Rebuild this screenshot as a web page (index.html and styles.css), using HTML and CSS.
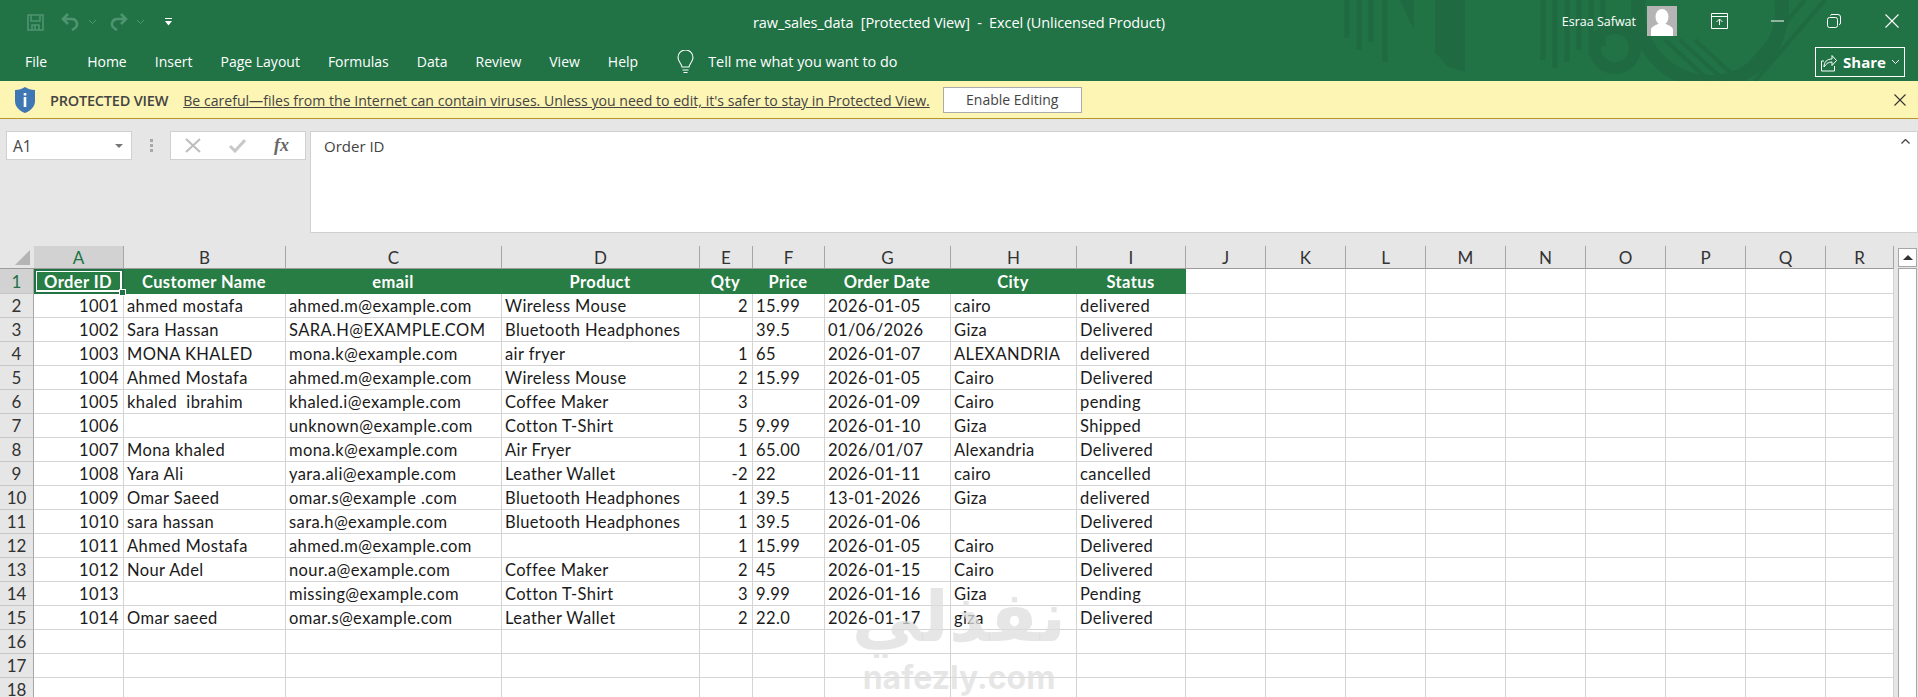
FILE: index.html
```html
<!DOCTYPE html>
<html lang="en">
<head>
    <meta charset="UTF-8">
    <meta name="viewport" content="width=device-width, initial-scale=1.0">
    <title>raw_sales_data - Excel</title>
    <link rel="stylesheet" href="styles.css">
</head>
<body>
    <!-- Title bar and ribbon tabs -->
    <header class="app-header">
        <svg class="header-pattern" width="600" height="81" viewBox="0 0 600 81" fill="none">
            <g stroke="#1f6a41" stroke-width="5">
                <path d="M12 0V38M24 0V50M36 0V42M50 0V62"/>
                <path d="M208 0V60M220 0V68M232 0V62M244 0V50M256 0V56M268 0V46"/>
            </g>
            <path d="M65 0l14 30V0zM100 0h30v72l-18-6-12-14z" fill="#1f6a41"/>
            <circle cx="280" cy="48" r="20" stroke="#1f6a41" stroke-width="12"/>
            <circle cx="375" cy="10" r="72" stroke="#1f6a41" stroke-width="14"/>
            <path d="M330 40l50 46M345 40l50 46M360 40l50 46M470 0l-70 81M490 0l-70 81" stroke="#1f6a41" stroke-width="4"/>
        </svg>
        <div class="title-row">
            <div class="qat">
                <svg width="17" height="17" viewBox="0 0 17 17" fill="none" stroke="#4f9470" stroke-width="1.6"><path d="M1 1h15v15H1zM4 1v6h9V1M5 16v-5h7v5M8 11v5"/></svg>
                <svg class="qat-undo" width="19" height="18" viewBox="0 0 19 18" fill="none" stroke="#4f9470" stroke-width="2.6"><path d="M7 1L2 6l5 5M2 6h9a5 5 0 0 1 3 9l-3 2"/></svg>
                <svg class="qat-chev" width="7" height="4" viewBox="0 0 7 4" fill="none" stroke="#4f9470"><path d="M0 0l3.5 3.5L7 0"/></svg>
                <svg class="qat-redo" width="19" height="18" viewBox="0 0 19 18" fill="none" stroke="#4f9470" stroke-width="2.6"><path d="M12 1l5 5-5 5M17 6H8a5 5 0 0 0-3 9l3 2"/></svg>
                <svg class="qat-chev" width="7" height="4" viewBox="0 0 7 4" fill="none" stroke="#4f9470"><path d="M0 0l3.5 3.5L7 0"/></svg>
                <svg class="qat-more" width="7" height="8" viewBox="0 0 7 8" fill="#fff"><path d="M0 0h7v1H0zM0 3h7L3.500 7.500z"/></svg>
            </div>
            <div class="doc-title">raw_sales_data&nbsp; [Protected View]&nbsp; -&nbsp; Excel (Unlicensed Product)</div>
            <div class="window-controls">
                <span class="user-name">Esraa Safwat</span>
                <svg class="avatar" width="30" height="30" viewBox="0 0 30 30"><rect width="30" height="30" fill="#b4b4b4"/><ellipse cx="15" cy="11" rx="6.500" ry="8" fill="#fff"/><path d="M4 30v-6c0-3 3-4 7-6h8c4 2 7 3 7 6v6z" fill="#fff"/></svg>
                <svg class="ctl-ribbon" width="17" height="16" viewBox="0 0 17 16" fill="none" stroke="#fff"><path d="M.5.500h16v15H.5zM.5 3.500h16M8.500 12V6M5.500 9l3-3 3 3"/></svg>
                <svg class="ctl-min" width="13" height="2" viewBox="0 0 13 2" stroke="#fff"><path d="M0 1h13"/></svg>
                <svg class="ctl-restore" width="14" height="14" viewBox="0 0 14 14" fill="none" stroke="#fff"><rect x=".5" y="3.500" width="10" height="10" rx="2"/><path d="M3.500 1.500q0-1 1.500-1h6q2.500 0 2.500 2.500v6q0 1.500-1.500 1.500"/></svg>
                <svg class="ctl-close" width="14" height="14" viewBox="0 0 14 14" stroke="#fff" stroke-width="1.100"><path d="M.5.500l13 13M13.500.500l-13 13"/></svg>
            </div>
        </div>
        <nav class="ribbon-tabs">
            <a class="tab tab-file">File</a>
            <a class="tab">Home</a>
            <a class="tab">Insert</a>
            <a class="tab">Page Layout</a>
            <a class="tab">Formulas</a>
            <a class="tab">Data</a>
            <a class="tab">Review</a>
            <a class="tab">View</a>
            <a class="tab">Help</a>
            <div class="tell-me">
                <svg width="17" height="24" viewBox="0 0 17 24" fill="none" stroke="#fff" stroke-width="1.100"><path d="M5 17c0-3-4-5-4-9.500a7.500 7.500 0 0 1 15 0C16 12 12 14 12 17zM5.500 20h6M6.500 22.500h4"/></svg>
                <span>Tell me what you want to do</span>
            </div>
            <button class="share-btn" type="button">
                <svg width="16" height="19" viewBox="0 0 16 19" fill="none" stroke="#fff"><path d="M3 8H.5v10h13v-5M3 14c0-5 3-8 8-8V2.500l4.500 5-4.500 5V9c-4 0-6 2-8 5z"/></svg>
                <span>Share</span>
                <svg width="7" height="4" viewBox="0 0 7 4" fill="none" stroke="#fff"><path d="M0 0l3.500 3.500L7 0"/></svg>
            </button>
        </nav>
    </header>

    <!-- Protected view message bar -->
    <div class="message-bar">
        <svg class="shield" width="20" height="26" viewBox="0 0 20 26"><path d="M10 0c3 2 6 3 10 3v11c0 6-5 10-10 12C5 24 0 20 0 14V3c4 0 7-1 10-3z" fill="#3f77b5"/><path d="M8.700 10h2.600v10H8.700zM8.700 6h2.600v2.500H8.700z" fill="#fff"/></svg>
        <strong class="message-label">PROTECTED VIEW</strong>
        <a class="message-text">Be careful—files from the Internet can contain viruses. Unless you need to edit, it's safer to stay in Protected View.</a>
        <button class="enable-btn" type="button">Enable Editing</button>
        <svg class="message-close" width="12" height="12" viewBox="0 0 12 12" stroke="#333" stroke-width="1.100"><path d="M.5.500l11 11M11.500.500l-11 11"/></svg>
    </div>

    <!-- Formula bar -->
    <div class="formula-bar">
        <div class="name-box">
            <span>A1</span>
            <svg width="8" height="4" viewBox="0 0 8 4" fill="#777"><path d="M0 0h8L4 4z"/></svg>
        </div>
        <div class="grip"><i></i><i></i><i></i></div>
        <div class="formula-buttons">
            <svg width="16" height="15" viewBox="0 0 16 15" stroke="#bdbdbd" stroke-width="2"><path d="M1 1l14 13M15 1L1 14"/></svg>
            <svg width="17" height="15" viewBox="0 0 17 15" fill="none" stroke="#c8c8c8" stroke-width="3"><path d="M1 8l5 5L16 2"/></svg>
            <span class="fx">fx</span>
        </div>
        <div class="formula-input">Order ID</div>
        <svg class="formula-collapse" width="9" height="5" viewBox="0 0 9 5" fill="none" stroke="#444" stroke-width="1.300"><path d="M.5 4.500l4-4 4 4"/></svg>
    </div>

    <!-- Worksheet -->
    <main class="sheet">
        <table class="grid">
            <colgroup>
                <col class="c-row"><col class="c-a"><col class="c-b"><col class="c-c"><col class="c-d"><col class="c-e"><col class="c-f"><col class="c-g"><col class="c-h"><col class="c-i">
                <col class="c-std"><col class="c-std"><col class="c-std"><col class="c-std"><col class="c-std"><col class="c-std"><col class="c-std"><col class="c-std"><col class="c-r">
            </colgroup>
            <thead>
                <tr class="col-heads">
                    <th class="corner"><span class="corner-mark"></span></th>
                    <th class="col-active">A</th><th>B</th><th>C</th><th>D</th><th>E</th><th>F</th><th>G</th><th>H</th><th>I</th><th>J</th><th>K</th><th>L</th><th>M</th><th>N</th><th>O</th><th>P</th><th>Q</th><th>R</th>
                </tr>
            </thead>
            <tbody>
                <tr class="head-row"><th class="row-active">1</th><td class="hc selected">Order ID<span class="fill-handle"></span></td><td class="hc">Customer Name</td><td class="hc">email</td><td class="hc">Product</td><td class="hc">Qty</td><td class="hc">Price</td><td class="hc">Order Date</td><td class="hc">City</td><td class="hc">Status</td><td></td><td></td><td></td><td></td><td></td><td></td><td></td><td></td><td></td></tr>
                <tr><th>2</th><td class="num">1001</td><td>ahmed mostafa</td><td>ahmed.m@example.com</td><td>Wireless Mouse</td><td class="num">2</td><td>15.99</td><td>2026-01-05</td><td>cairo</td><td>delivered</td><td></td><td></td><td></td><td></td><td></td><td></td><td></td><td></td><td></td></tr>
                <tr><th>3</th><td class="num">1002</td><td>Sara Hassan</td><td>SARA.H@EXAMPLE.COM</td><td>Bluetooth Headphones</td><td class="num"></td><td>39.5</td><td>01/06/2026</td><td>Giza</td><td>Delivered</td><td></td><td></td><td></td><td></td><td></td><td></td><td></td><td></td><td></td></tr>
                <tr><th>4</th><td class="num">1003</td><td>MONA KHALED</td><td>mona.k@example.com</td><td>air fryer</td><td class="num">1</td><td>65</td><td>2026-01-07</td><td>ALEXANDRIA</td><td>delivered</td><td></td><td></td><td></td><td></td><td></td><td></td><td></td><td></td><td></td></tr>
                <tr><th>5</th><td class="num">1004</td><td>Ahmed Mostafa</td><td>ahmed.m@example.com</td><td>Wireless Mouse</td><td class="num">2</td><td>15.99</td><td>2026-01-05</td><td>Cairo</td><td>Delivered</td><td></td><td></td><td></td><td></td><td></td><td></td><td></td><td></td><td></td></tr>
                <tr><th>6</th><td class="num">1005</td><td>khaled&nbsp; ibrahim</td><td>khaled.i@example.com</td><td>Coffee Maker</td><td class="num">3</td><td></td><td>2026-01-09</td><td>Cairo</td><td>pending</td><td></td><td></td><td></td><td></td><td></td><td></td><td></td><td></td><td></td></tr>
                <tr><th>7</th><td class="num">1006</td><td></td><td>unknown@example.com</td><td>Cotton T-Shirt</td><td class="num">5</td><td>9.99</td><td>2026-01-10</td><td>Giza</td><td>Shipped</td><td></td><td></td><td></td><td></td><td></td><td></td><td></td><td></td><td></td></tr>
                <tr><th>8</th><td class="num">1007</td><td>Mona khaled</td><td>mona.k@example.com</td><td>Air Fryer</td><td class="num">1</td><td>65.00</td><td>2026/01/07</td><td>Alexandria</td><td>Delivered</td><td></td><td></td><td></td><td></td><td></td><td></td><td></td><td></td><td></td></tr>
                <tr><th>9</th><td class="num">1008</td><td>Yara Ali</td><td>yara.ali@example.com</td><td>Leather Wallet</td><td class="num">-2</td><td>22</td><td>2026-01-11</td><td>cairo</td><td>cancelled</td><td></td><td></td><td></td><td></td><td></td><td></td><td></td><td></td><td></td></tr>
                <tr><th>10</th><td class="num">1009</td><td>Omar Saeed</td><td>omar.s@example .com</td><td>Bluetooth Headphones</td><td class="num">1</td><td>39.5</td><td>13-01-2026</td><td>Giza</td><td>delivered</td><td></td><td></td><td></td><td></td><td></td><td></td><td></td><td></td><td></td></tr>
                <tr><th>11</th><td class="num">1010</td><td>sara hassan</td><td>sara.h@example.com</td><td>Bluetooth Headphones</td><td class="num">1</td><td>39.5</td><td>2026-01-06</td><td></td><td>Delivered</td><td></td><td></td><td></td><td></td><td></td><td></td><td></td><td></td><td></td></tr>
                <tr><th>12</th><td class="num">1011</td><td>Ahmed Mostafa</td><td>ahmed.m@example.com</td><td></td><td class="num">1</td><td>15.99</td><td>2026-01-05</td><td>Cairo</td><td>Delivered</td><td></td><td></td><td></td><td></td><td></td><td></td><td></td><td></td><td></td></tr>
                <tr><th>13</th><td class="num">1012</td><td>Nour Adel</td><td>nour.a@example.com</td><td>Coffee Maker</td><td class="num">2</td><td>45</td><td>2026-01-15</td><td>Cairo</td><td>Delivered</td><td></td><td></td><td></td><td></td><td></td><td></td><td></td><td></td><td></td></tr>
                <tr><th>14</th><td class="num">1013</td><td></td><td>missing@example.com</td><td>Cotton T-Shirt</td><td class="num">3</td><td>9.99</td><td>2026-01-16</td><td>Giza</td><td>Pending</td><td></td><td></td><td></td><td></td><td></td><td></td><td></td><td></td><td></td></tr>
                <tr><th>15</th><td class="num">1014</td><td>Omar saeed</td><td>omar.s@example.com</td><td>Leather Wallet</td><td class="num">2</td><td>22.0</td><td>2026-01-17</td><td>giza</td><td>Delivered</td><td></td><td></td><td></td><td></td><td></td><td></td><td></td><td></td><td></td></tr>
                <tr><th>16</th><td></td><td></td><td></td><td></td><td></td><td></td><td></td><td></td><td></td><td></td><td></td><td></td><td></td><td></td><td></td><td></td><td></td><td></td></tr>
                <tr><th>17</th><td></td><td></td><td></td><td></td><td></td><td></td><td></td><td></td><td></td><td></td><td></td><td></td><td></td><td></td><td></td><td></td><td></td><td></td></tr>
                <tr><th>18</th><td></td><td></td><td></td><td></td><td></td><td></td><td></td><td></td><td></td><td></td><td></td><td></td><td></td><td></td><td></td><td></td><td></td><td></td></tr>
            </tbody>
        </table>
        <div class="scrollbar">
            <div class="scroll-up"><svg width="10" height="5" viewBox="0 0 10 5" fill="#333"><path d="M0 5l5-5 5 5z"/></svg></div>
            <div class="scroll-track"></div>
        </div>
        <!-- Site watermark lying over the sheet -->
        <div class="watermark">
            <div class="wm-arabic" lang="ar" dir="rtl">نفذلي</div>
            <div class="wm-latin">nafezly.com</div>
        </div>
    </main>
</body>
</html>
```

FILE: styles.css
```css
* {
    margin: 0;
    padding: 0;
    box-sizing: border-box;
}

html, body {
    height: 100%;
    overflow: hidden;
}

body {
    background-color: #e6e6e6;
    font-family: "Open Sans", "Noto Sans", sans-serif;
    color: #333;
    display: flex;
    flex-direction: column;
}

/* header */
.app-header {
    position: relative;
    height: 81px;
    background-color: #217346;
    color: #fff;
    flex: none;
    overflow: hidden;
}

.header-pattern {
    position: absolute;
    top: 0;
    left: 1335px;
}

.title-row {
    position: relative;
    height: 44px;
    display: grid;
    grid-template-columns: 1fr auto 1fr;
    align-items: center;
}

.qat {
    display: flex;
    align-items: center;
    padding-left: 27px;
}

.qat-undo { margin-left: 17px; }
.qat-redo { margin-left: 13px; }
.qat-chev { margin-left: 9px; }
.qat-more { margin-left: 21px; }

.doc-title {
    font-size: 14.5px;
    letter-spacing: -0.1px;
    white-space: pre;
}

.window-controls {
    display: flex;
    align-items: center;
    justify-content: flex-end;
    height: 100%;
    padding-bottom: 2px;
}

.user-name {
    font-size: 12.500px;
    margin-right: 11px;
}

.avatar { margin-right: 34px; }
.ctl-ribbon { margin-right: 43px; }
.ctl-min { margin-right: 43px; }
.ctl-restore { margin-right: 44px; }
.ctl-close { margin-right: 19px; }

.ribbon-tabs {
    position: relative;
    height: 37px;
    display: flex;
    align-items: center;
    padding-left: 25px;
    padding-bottom: 2px;
    gap: 28px;
    font-size: 14px;
}

.tab-file { margin-right: 12px; }

.tell-me {
    display: flex;
    align-items: center;
    gap: 14px;
    margin-left: 11px;
    font-size: 14.4px;
}

.share-btn {
    position: absolute;
    right: 13px;
    top: 3px;
    width: 90px;
    height: 30px;
    background: transparent;
    border: 1px solid #fff;
    color: #fff;
    font-family: inherit;
    font-size: 15px;
    font-weight: 700;
    display: flex;
    align-items: center;
    justify-content: center;
    gap: 6px;
}

/* message bar */
.message-bar {
    height: 38px;
    flex: none;
    background-color: #fdf5b4;
    border-bottom: 1px solid #b5982c;
    display: flex;
    align-items: center;
    padding-left: 15px;
    font-size: 14.1px;
    color: #444;
}

.message-label {
    font-weight: 600;
    font-size: 14.5px;
    margin-left: 15px;
    padding-top: 2px;
    letter-spacing: -0.2px;
}

.message-text {
    margin-left: 15px;
    padding-top: 2px;
    text-decoration: underline;
    white-space: nowrap;
}

.enable-btn {
    width: 139px;
    height: 26px;
    margin-left: 13px;
    background: #fff;
    border: 1px solid #ababab;
    font-family: inherit;
    font-size: 14px;
    color: #444;
}

.message-close { margin-left: auto; margin-right: 12px; }

/* formula bar */
.formula-bar {
    position: relative;
    height: 127px;
    flex: none;
    display: flex;
    align-items: flex-start;
    padding: 12px 0 0 6px;
}

.name-box {
    width: 126px;
    height: 29px;
    background: #fff;
    border: 1px solid #d0d0d0;
    display: flex;
    align-items: center;
    justify-content: space-between;
    padding: 0 8px 0 6px;
    font-size: 15.5px;
    color: #444;
}

.grip {
    width: 38px;
    height: 29px;
    display: flex;
    flex-direction: column;
    align-items: center;
    justify-content: center;
    gap: 2px;
}

.grip i {
    width: 3px;
    height: 3px;
    background: #a8a8a8;
}

.formula-buttons {
    width: 136px;
    height: 29px;
    background: #fff;
    border: 1px solid #d0d0d0;
    display: flex;
    align-items: center;
    justify-content: space-between;
    padding: 0 16px 0 14px;
}

.fx {
    font-family: "Liberation Serif", serif;
    font-style: italic;
    font-weight: 700;
    font-size: 18px;
    color: #666;
}

.formula-input {
    width: 1608px;
    height: 102px;
    margin-left: 4px;
    background: #fff;
    border: 1px solid #d0d0d0;
    padding: 4px 0 0 13px;
    font-size: 15px;
    color: #444;
}

.formula-collapse {
    position: absolute;
    top: 20px;
    right: 8px;
}

/* worksheet */
.sheet {
    position: relative;
    flex: 1;
    min-height: 0;
    overflow: hidden;
}

.grid {
    border-collapse: separate;
    border-spacing: 0;
    table-layout: fixed;
    width: 1894px;
    font-family: Lato, "Liberation Sans", sans-serif;
    font-size: 16.5px;
    letter-spacing: 0.4px;
    background: #fff;
}

.c-row { width: 34px; }
.c-a { width: 90px; }
.c-b { width: 162px; }
.c-c { width: 216px; }
.c-d { width: 198px; }
.c-e { width: 53px; }
.c-f { width: 72px; }
.c-g { width: 126px; }
.c-h { width: 126px; }
.c-i { width: 109px; }
.c-std { width: 80px; }
.c-r { width: 68px; }

.col-heads th {
    height: 23px;
    background: #e6e6e6;
    border-right: 1px solid #a6a6a6;
    border-bottom: 1px solid #9c9c9c;
    font-weight: 400;
    font-size: 17px;
    letter-spacing: 0;
    color: #333;
}

.col-heads th.corner {
    position: relative;
    border-right: none;
}

.corner-mark {
    position: absolute;
    right: 4px;
    bottom: 3px;
    width: 0;
    height: 0;
    border-left: 15px solid transparent;
    border-bottom: 15px solid #b4b4b4;
}

.col-heads th.col-active {
    background: #d2d2d2;
    color: #217346;
}

tbody tr {
    height: 24px;
}

tbody tr.head-row {
    height: 25px;
}

tbody th {
    background: #e6e6e6;
    border-right: 1px solid #a6a6a6;
    border-bottom: 1px solid #c6c6c6;
    font-weight: 400;
    font-size: 17px;
    letter-spacing: 0;
    color: #333;
}

tbody th.row-active {
    background: #d2d2d2;
    color: #217346;
}

td {
    position: relative;
    border-right: 1px solid #d4d4d4;
    border-bottom: 1px solid #d4d4d4;
    padding: 1px 4px 0 3px;
    color: #1a1a1a;
    white-space: nowrap;
    overflow: hidden;
}

td.num { text-align: right; }

td.hc {
    background: #277d44;
    border-right-color: #277d44;
    border-bottom-color: #277d44;
    color: #fff;
    font-weight: 700;
    text-align: center;
    overflow: visible;
}

td.selected {
    z-index: 2;
    outline: 2px solid #217346;
    outline-offset: -2px;
    box-shadow: inset 0 0 0 3px #fff;
}

.fill-handle {
    position: absolute;
    right: -3px;
    bottom: -3px;
    width: 7px;
    height: 7px;
    background: #217346;
    border: 1px solid #fff;
}

.scrollbar {
    position: absolute;
    top: 2px;
    left: 1898px;
    width: 19px;
    bottom: 0;
    display: flex;
    flex-direction: column;
    gap: 1px;
}

.scroll-up {
    height: 19px;
    background: #fff;
    border: 1px solid #a6a6a6;
    display: flex;
    align-items: center;
    justify-content: center;
}

.scroll-track {
    flex: 1;
    background: #fff;
    border: 1px solid #a6a6a6;
    border-bottom: none;
}

.watermark {
    position: absolute;
    left: 852px;
    top: 325px;
    width: 214px;
    text-align: center;
    pointer-events: none;
    color: rgba(222, 222, 222, 0.75);
    font-weight: 700;
}

.wm-arabic {
    font-family: "DejaVu Sans", sans-serif;
    font-size: 70px;
    line-height: 92px;
}

.wm-latin {
    font-family: Inter, sans-serif;
    font-size: 32px;
    line-height: 30px;
}
```
